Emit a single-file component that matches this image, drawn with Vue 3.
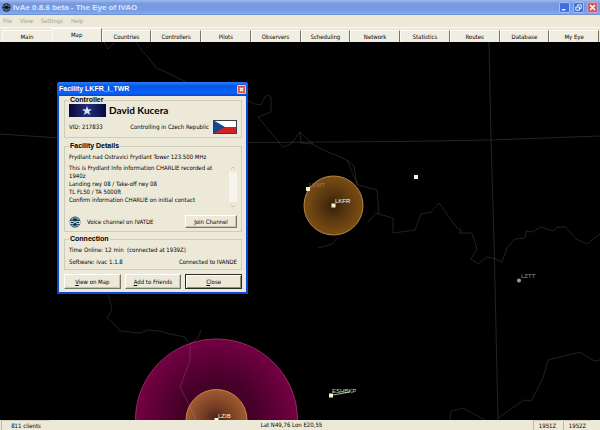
<script setup>
import { ref } from 'vue'

const menus = ['File', 'View', 'Settings', 'Help']
const tabs = [
  'Main', 'Map', 'Countries', 'Controllers', 'Pilots', 'Observers',
  'Scheduling', 'Network', 'Statistics', 'Routes', 'Database', 'My Eye',
]
const active = ref('Map')
const dialogOpen = ref(true)

const atis = [
  'This is Frydlant Info information CHARLIE recorded at 1940z',
  'Landing rwy 08 / Take-off rwy 08',
  'TL FL50 / TA 5000ft',
  'Confirm information CHARLIE on initial contact',
]

const borders = [
  '247,100 255,104 261,105 265,97 268,95 271,97 271,112 258,117 272,134 283,147 291,144 300,132 314,145 321,149 347,160 352,172 358,185 377,190 379,214 376,213 368,222',
  '379,214 393,218 393,233 415,230 421,214 431,212 439,203 457,228 461,230 460,233 472,233 477,249 471,259 478,264 487,257 493,258 502,262 507,248 515,239 525,238 526,231 532,232 541,227 553,231 557,227 566,227 576,239 587,244 600,234',
  '300,132 301,143 313,144',
  '347,160 354,166 357,185',
  '338,237 332,244 318,248',
  '498,418 524,400 531,401 543,378 548,360 580,352 594,361 600,360',
  '450,420 451,411 463,408 485,420',
  '104,42 108,49 114,43',
  '136,42 142,51 148,57 156,68 170,74 186,82',
  '120,331 140,333 148,330 160,331 170,334 185,337 188,343',
  '201,330 198,338 190,344 190,360 180,387 188,403 196,420',
  '108,293 112,310 107,318 114,324 120,331',
]
</script>

<template>
  <div class="app">
    <header class="titlebar">
      <svg class="appicon" viewBox="0 0 10 10" aria-hidden="true">
        <circle cx="5" cy="5" r="4.6" fill="#14203a" />
        <path d="M1 4 Q5 0 9 4 M1 6 Q5 10 9 6 M5 1V9 M2 3L8 7 M8 3L2 7" stroke="#7f9cb8" stroke-width=".7" fill="none" />
        <circle cx="5" cy="5" r="1.6" fill="#05080c" />
      </svg>
      <h1>IvAe 0.8.6 beta - The Eye of IVAO</h1>
      <div class="winbtns">
        <button class="wb" aria-label="Minimize">
          <svg viewBox="0 0 10 10"><path d="M2 7.5H6" stroke="#fff" stroke-width="1.5" /></svg>
        </button>
        <button class="wb" aria-label="Restore">
          <svg viewBox="0 0 10 10"><path d="M4 4V2H8V6H6M2 4.5H6V8H2Z" stroke="#fff" fill="none" /></svg>
        </button>
        <button class="wb red" aria-label="Close window">
          <svg viewBox="0 0 10 10"><path d="M2.3 2.3L7.7 7.7M7.7 2.3L2.3 7.7" stroke="#fff" stroke-width="1.5" /></svg>
        </button>
      </div>
    </header>

    <nav class="menubar">
      <button v-for="m in menus" :key="m">{{ m }}</button>
    </nav>

    <nav class="tabs">
      <button v-for="t in tabs" :key="t" :class="{ on: t === active }" @click="active = t">{{ t }}</button>
    </nav>

    <main class="map">
      <svg class="chart" viewBox="0 42 600 378" preserveAspectRatio="xMinYMin slice">
        <defs>
          <radialGradient id="amber">
            <stop offset="0" stop-color="#35210a" />
            <stop offset=".5" stop-color="#5c390f" />
            <stop offset="1" stop-color="#7c4d14" />
          </radialGradient>
          <radialGradient id="plum">
            <stop offset="0" stop-color="#2c0018" />
            <stop offset=".5" stop-color="#48002a" />
            <stop offset="1" stop-color="#740044" />
          </radialGradient>
          <radialGradient id="copper">
            <stop offset="0" stop-color="#4a2015" />
            <stop offset=".5" stop-color="#7a4024" />
            <stop offset="1" stop-color="#a05a30" />
          </radialGradient>
        </defs>
        <circle cx="216.500" cy="420" r="81" fill="url(#plum)" stroke="#96285f" />
        <circle cx="216.500" cy="420" r="30.500" fill="url(#copper)" stroke="#c98248" />
        <circle cx="333.500" cy="205.500" r="29.500" fill="url(#amber)" stroke="#b98540" />
        <g class="grid">
          <polyline points="0,134 60,138 150,141 250,142.500 400,141.500 490,140 600,136" />
          <polyline points="489,42 491,140 494,240 498,420" />
        </g>
        <g class="borders">
          <polyline v-for="(b, i) in borders" :key="i" :points="b" />
        </g>
        <g class="marks">
          <rect x="306" y="187" width="4" height="4" />
          <rect x="331.500" y="203.500" width="4" height="4" />
          <rect x="414" y="175" width="4" height="4" />
          <rect x="329" y="393.500" width="4" height="4" />
          <rect x="214.500" y="418" width="4" height="4" fill="#fff" />
        </g>
        <circle cx="519" cy="280.500" r="2" fill="#9a9a9a" />
        <path d="M333 395L350 392" stroke="#b9bb72" />
        <text x="309" y="187" fill="#a07c44">LKMT</text>
        <text x="335" y="203" fill="#fffaf0">LKFR</text>
        <text x="521" y="278" fill="#9a9a9a">LZTT</text>
        <text x="332" y="393" fill="#d8dc9c">ESHBKP</text>
        <text x="218" y="418" fill="#fff0e6">LZIB</text>
      </svg>

      <section v-if="dialogOpen" class="dialog" role="dialog" aria-label="Facility LKFR_I_TWR">
        <header class="dlgtitle">
          <h2>Facility LKFR_I_TWR</h2>
          <button class="dlgx" aria-label="Close dialog" @click="dialogOpen = false">
            <svg viewBox="0 0 8 8"><path d="M2 2L6 6M6 2L2 6" stroke="#fff" stroke-width="1.300" /></svg>
          </button>
        </header>
        <div class="dlgbody">
          <fieldset class="controller">
            <legend>Controller</legend>
            <div class="row">
              <svg class="badge" viewBox="0 0 37 13" aria-hidden="true">
                <defs>
                  <linearGradient id="navy">
                    <stop offset="0" stop-color="#05083a" />
                    <stop offset=".5" stop-color="#262e7c" />
                    <stop offset="1" stop-color="#05083e" />
                  </linearGradient>
                </defs>
                <rect width="37" height="13" fill="url(#navy)" />
                <path d="M18 2L19.200 5.200L23 5.400L20 7.600L21.300 11L18 9L14.700 11L16 7.600L13 5.400L16.800 5.200Z" fill="#dcdff0" />
              </svg>
              <strong class="name">David Kucera</strong>
            </div>
            <div class="row vid">
              <span>VID: 217833</span>
              <span class="push">Controlling in Czech Republic</span>
              <svg class="flag" viewBox="0 0 24 14" role="img" aria-label="Czech flag">
                <rect width="24" height="14" fill="#fff" />
                <rect y="7" width="24" height="7" fill="#d42025" />
                <path d="M0 0L12 7L0 14Z" fill="#17478f" />
                <rect x=".5" y=".5" width="23" height="13" fill="none" stroke="#3c3c50" />
              </svg>
            </div>
          </fieldset>

          <fieldset class="details">
            <legend>Facility Details</legend>
            <p>Frydlant nad Ostravici Frydlant Tower 123.500 MHz</p>
            <div class="pane">
              <div class="atis"><p v-for="l in atis" :key="l">{{ l }}</p></div>
              <div class="scroll" aria-hidden="true">
                <svg viewBox="0 0 8 8"><path d="M2 5L4 3L6 5" /></svg>
                <svg viewBox="0 0 8 8"><path d="M2 3L4 5L6 3" /></svg>
              </div>
            </div>
            <div class="row voice">
              <svg class="globe" viewBox="0 0 12 12" aria-hidden="true">
                <circle cx="6" cy="6" r="5.500" fill="#16334e" />
                <path d="M1.500 3.500Q6 0 10.500 3.500M2 9Q6 12 10 9M4 1.500L3 4M8 1.500L9 4M4 10.500L3.500 8.500M8 10.500L8.500 8.500" stroke="#86b4d2" fill="none" />
                <path d="M0 5.500Q3 4 6 5.500Q9 4 12 5.500L11 8H8L6 6.800L4 8H1Z" fill="#b4d4e6" />
                <path d="M2 6.500H4.500M7.500 6.500H10" stroke="#0f2638" />
              </svg>
              <span>Voice channel on IVATDE</span>
              <button class="btn join"><u>J</u>oin Channel</button>
            </div>
          </fieldset>

          <fieldset class="connection">
            <legend>Connection</legend>
            <p>Time Online: 12 min&nbsp; (connected at 1939Z)</p>
            <p class="row"><span>Software: ivac 1.1.8</span><span class="push">Connected to IVANDE</span></p>
          </fieldset>

          <div class="actions">
            <button class="btn"><u>V</u>iew on Map</button>
            <button class="btn"><u>A</u>dd to Friends</button>
            <button class="btn default" @click="dialogOpen = false"><u>C</u>lose</button>
          </div>
        </div>
      </section>
    </main>

    <footer class="status">
      <span class="cell clients">811 clients</span>
      <span class="coords">Lat N49,76 Lon E20,55</span>
      <span class="cell time">1951Z</span>
      <span class="cell time">1952Z</span>
    </footer>
  </div>
</template>

<style>
body {
  margin: 0;
  background: #000;
}
</style>

<style scoped>
.app {
  display: flex;
  flex-direction: column;
  min-height: 100vh;
  background: #ece9d8;
  color: #000;
  font: 6px/8px "DejaVu Sans Condensed", "Liberation Sans", Arial, sans-serif;
}
.app * {
  box-sizing: border-box;
}
button {
  font: inherit;
  color: inherit;
  padding: 0;
  margin: 0;
  border: 0;
  background: none;
}
h1, h2, p {
  margin: 0;
}
.titlebar {
  display: flex;
  align-items: center;
  height: 15px;
  padding: 0 2px;
  background: linear-gradient(#9db9ee, #7499e0 25%, #789ce4 70%, #84a8ee 90%, #6787cc);
}
.appicon {
  width: 9px;
  height: 9px;
}
h1 {
  margin-left: 2px;
  font: bold 8px/10px "Liberation Sans", Arial, sans-serif;
  color: #dbe6fb;
}
.winbtns {
  display: flex;
  gap: 3px;
  margin-left: auto;
}
.wb {
  display: flex;
  width: 11px;
  height: 11px;
  border: 1px solid #a5bdf0;
  border-radius: 2px;
  background: #426fdc;
}
.wb.red {
  background: #c4606c;
  border-color: #d8a0b4;
}
.menubar {
  display: flex;
  gap: 8px;
  height: 12px;
  padding-left: 3px;
  color: #a5a294;
}
.tabs {
  display: grid;
  grid-template-columns: repeat(12, 1fr);
  align-items: end;
  height: 15px;
  padding: 0 1px 0 2px;
  border-top: 1px solid #faf8f0;
}
.tabs button {
  height: 12px;
  border-top: 1px solid #fbfaf4;
  border-right: 1px solid #77756a;
  border-left: 1px solid #fbfaf4;
  background: #f0eee2;
}
.tabs button:first-child {
  border-right-color: #f0eee2;
}
.tabs button.on {
  height: 14px;
  padding-bottom: 2px;
}
.map {
  position: relative;
  flex: 1;
  overflow: hidden;
  background: #000;
}
.chart {
  position: absolute;
  inset: 0;
  width: 100%;
  height: 100%;
}
.chart text {
  font: 6px "Liberation Sans", Arial, sans-serif;
}
.grid polyline {
  fill: none;
  stroke: #242424;
}
.borders polyline {
  fill: none;
  stroke: #fff;
  stroke-opacity: .13;
}
.marks {
  fill: #f7f3cc;
}
.dialog {
  position: absolute;
  left: 57px;
  top: 40px;
  width: 191px;
  border: 2px solid #0c45dc;
  border-top: 0;
  border-radius: 3px 3px 0 0;
  background: #ece9d8;
}
.dlgtitle {
  display: flex;
  align-items: center;
  justify-content: space-between;
  height: 14px;
  margin: 0 -2px;
  padding: 0 2px;
  border-radius: 3px 3px 0 0;
  background: linear-gradient(#2a7cf8, #0656e6 30%, #0a62f8 80%, #0546c8);
}
h2 {
  font: bold 7px/10px "Liberation Sans", Arial, sans-serif;
  color: #fff;
}
.dlgx {
  display: flex;
  width: 9px;
  height: 9px;
  border: 1px solid #f3c8c0;
  border-radius: 1px;
  background: #d8503c;
}
.dlgbody {
  padding: 0 4px 3px 5px;
}
fieldset {
  position: relative;
  min-width: 0;
  margin: 0 0 4px;
  padding: 0 4px 3px;
  border: 1px solid #cfccbb;
}
fieldset.details {
  margin-bottom: 3px;
}
legend {
  padding: 0 1px;
  font: bold 7px/8px "Liberation Sans", Arial, sans-serif;
}
.row {
  display: flex;
  align-items: center;
}
.push {
  margin-left: auto;
}
.badge {
  width: 37px;
  height: 13px;
}
.name {
  margin-left: 3px;
  font: bold 10px/13px Lato, "Liberation Sans", sans-serif;
}
.vid {
  gap: 4px;
  margin-top: 3px;
}
.flag {
  width: 24px;
  height: 14px;
}
.details > p {
  margin: 3px 0;
}
.pane {
  display: flex;
  height: 46px;
}
.atis {
  flex: 1;
  padding-right: 4px;
}
.scroll {
  display: flex;
  flex-direction: column;
  justify-content: space-between;
  width: 8px;
  background: #f6f4ec;
}
.scroll svg {
  width: 8px;
  height: 8px;
  fill: none;
  stroke: #c9c6b6;
  background: #ece9d8;
}
.voice {
  gap: 6px;
  margin-top: 5px;
}
.globe {
  width: 12px;
  height: 12px;
}
.btn {
  flex: 1;
  height: 15px;
  border: 1px solid;
  border-color: #fff #77756a #77756a #fff;
  background: #ece9d8;
  box-shadow: inset -1px -1px #c5c2b2;
}
.btn.join {
  flex: none;
  width: 52px;
  height: 13px;
  margin-left: auto;
}
.btn.default {
  border-color: #2a2a28;
  box-shadow: inset 1px 1px #fff, inset -1px -1px #8d8a7c;
}
.connection p:last-child {
  margin-top: 4px;
}
.connection p {
  margin-top: 3px;
}
.actions {
  display: flex;
  gap: 4px;
}
.status {
  display: flex;
  align-items: center;
  gap: 2px;
  height: 10px;
  padding: 0 9px 0 1px;
}
.cell {
  height: 10px;
  line-height: 10px;
  text-align: center;
  border-left: 1px solid #bcb9a9;
  border-top: 1px solid #d3d0c0;
}
.clients {
  width: 49px;
}
.time {
  width: 28px;
}
.coords {
  flex: 1;
  line-height: 10px;
  text-align: center;
}
</style>
